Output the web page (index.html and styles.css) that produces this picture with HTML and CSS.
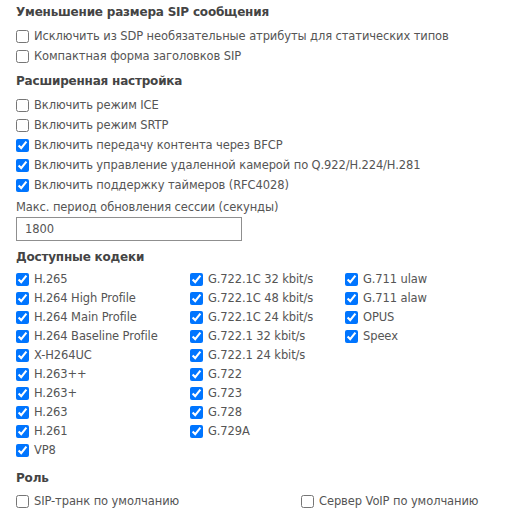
FILE: index.html
```html
<!DOCTYPE html>
<html lang="ru">
<head>
<meta charset="utf-8">
<link rel="stylesheet" href="styles.css">
</head>
<body>
<div class="page">
  <div class="heading h-first">Уменьшение размера SIP сообщения</div>
  <div class="rows">
    <label class="row"><input type="checkbox"><span>Исключить из SDP необязательные атрибуты для статических типов</span></label>
    <label class="row"><input type="checkbox"><span>Компактная форма заголовков SIP</span></label>
  </div>

  <div class="heading h-adv">Расширенная настройка</div>
  <div class="rows">
    <label class="row"><input type="checkbox"><span>Включить режим ICE</span></label>
    <label class="row"><input type="checkbox"><span>Включить режим SRTP</span></label>
    <label class="row"><input type="checkbox" checked><span>Включить передачу контента через BFCP</span></label>
    <label class="row"><input type="checkbox" checked><span>Включить управление удаленной камерой по Q.922/H.224/H.281</span></label>
    <label class="row"><input type="checkbox" checked><span>Включить поддержку таймеров (RFC4028)</span></label>
  </div>
  <div class="field-label">Макс. период обновления сессии (секунды)</div>
  <input class="text-input" type="text" value="1800">

  <div class="heading h-codecs">Доступные кодеки</div>
  <div class="codecs">
    <div class="col col-1">
      <label class="crow"><input type="checkbox" checked><span>H.265</span></label>
      <label class="crow"><input type="checkbox" checked><span>H.264 High Profile</span></label>
      <label class="crow"><input type="checkbox" checked><span>H.264 Main Profile</span></label>
      <label class="crow"><input type="checkbox" checked><span>H.264 Baseline Profile</span></label>
      <label class="crow"><input type="checkbox" checked><span>X-H264UC</span></label>
      <label class="crow"><input type="checkbox" checked><span>H.263++</span></label>
      <label class="crow"><input type="checkbox" checked><span>H.263+</span></label>
      <label class="crow"><input type="checkbox" checked><span>H.263</span></label>
      <label class="crow"><input type="checkbox" checked><span>H.261</span></label>
      <label class="crow"><input type="checkbox" checked><span>VP8</span></label>
    </div>
    <div class="col col-2">
      <label class="crow"><input type="checkbox" checked><span>G.722.1C 32 kbit/s</span></label>
      <label class="crow"><input type="checkbox" checked><span>G.722.1C 48 kbit/s</span></label>
      <label class="crow"><input type="checkbox" checked><span>G.722.1C 24 kbit/s</span></label>
      <label class="crow"><input type="checkbox" checked><span>G.722.1 32 kbit/s</span></label>
      <label class="crow"><input type="checkbox" checked><span>G.722.1 24 kbit/s</span></label>
      <label class="crow"><input type="checkbox" checked><span>G.722</span></label>
      <label class="crow"><input type="checkbox" checked><span>G.723</span></label>
      <label class="crow"><input type="checkbox" checked><span>G.728</span></label>
      <label class="crow"><input type="checkbox" checked><span>G.729A</span></label>
    </div>
    <div class="col col-3">
      <label class="crow"><input type="checkbox" checked><span>G.711 ulaw</span></label>
      <label class="crow"><input type="checkbox" checked><span>G.711 alaw</span></label>
      <label class="crow"><input type="checkbox" checked><span>OPUS</span></label>
      <label class="crow"><input type="checkbox" checked><span>Speex</span></label>
    </div>
  </div>

  <div class="heading h-role">Роль</div>
  <div class="roles">
    <label class="row role-1"><input type="checkbox"><span>SIP-транк по умолчанию</span></label>
    <label class="row role-2"><input type="checkbox"><span>Сервер VoIP по умолчанию</span></label>
  </div>
</div>
</body>
</html>
```

FILE: styles.css
```css
html, body {
  margin: 0;
  padding: 0;
  background: #ffffff;
}

body {
  font-family: "DejaVu Sans", Verdana, sans-serif;
  font-size: 11.5px;
  letter-spacing: -0.1px;
  color: #555555;
}

.page {
  padding: 2px 0 0 16px;
}

.heading {
  font-size: 12px;
  font-weight: bold;
  letter-spacing: -0.2px;
  color: #444444;
  line-height: 20px;
  height: 20px;
}

.h-first { margin-top: 0; }
.h-adv { margin-top: 5px; }
.h-codecs { margin-top: 6px; }
.h-role { margin-top: 8px; }

.rows {
  margin-top: 4px;
  display: flex;
  flex-direction: column;
}

.row {
  display: flex;
  align-items: center;
  height: 20px;
  line-height: 20px;
  white-space: nowrap;
}

input[type="checkbox"] {
  width: 13px;
  height: 13px;
  margin: 0 5px 0 0;
  flex: none;
}

.field-label {
  line-height: 20px;
  height: 20px;
  margin-top: 2px;
}

.text-input {
  display: block;
  box-sizing: border-box;
  width: 226px;
  height: 24px;
  margin: 0;
  padding: 0 8px;
  border: 1px solid #8f8f8f;
  border-radius: 0;
  font-family: inherit;
  font-size: 11.5px;
  letter-spacing: -0.1px;
  color: #555555;
  outline: none;
}

.codecs {
  display: flex;
  margin-top: 3px;
}

.col {
  display: flex;
  flex-direction: column;
}

.col-1 { width: 174px; }
.col-2 { width: 155px; }

.crow {
  display: flex;
  align-items: center;
  height: 19px;
  line-height: 19px;
  white-space: nowrap;
}

.roles {
  display: flex;
  margin-top: 3px;
}

.role-1 { width: 285px; }
```
